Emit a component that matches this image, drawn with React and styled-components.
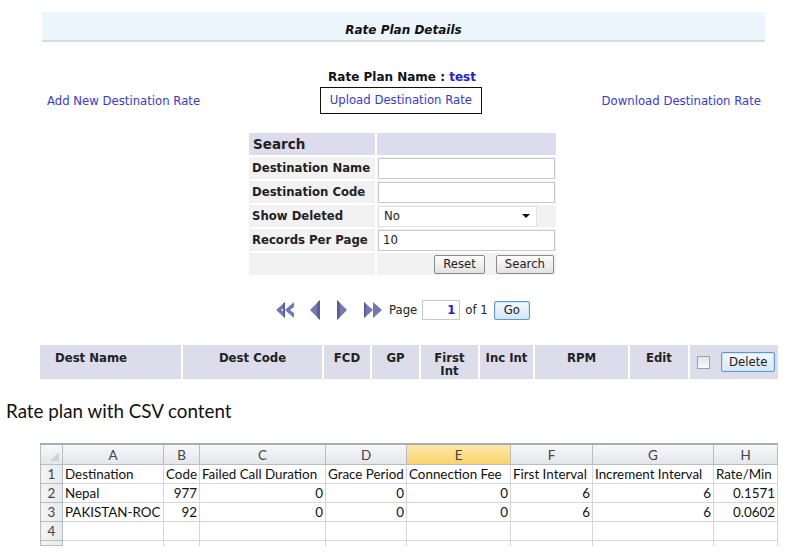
import React from "react";
import styled, { createGlobalStyle } from "styled-components";

const Global = createGlobalStyle`
  html, body { margin: 0; padding: 0; background: #fff; }
  body { font-family: "DejaVu Sans", Verdana, sans-serif; font-size: 11.7px; color: #222; }
`;

const Page = styled.div`
  width: 794px;
  height: 557px;
  overflow: hidden;
  padding-top: 12px;
  box-sizing: border-box;
`;

const TitleBar = styled.div`
  box-sizing: border-box;
  margin: 0 29px 0 42px;
  height: 30px;
  background: #edf5fd;
  border-bottom: 2px solid #d6dbe0;
  display: flex;
  align-items: center;
  justify-content: center;
  font-weight: bold;
  font-style: italic;
  font-size: 12px;
  color: #111;
  padding-top: 7px;
`;

const PlanName = styled.div`
  margin-top: 28px;
  text-align: center;
  font-weight: bold;
  font-size: 12px;
  color: #111;
  padding-left: 10px;
  span { color: #2222cc; }
`;

const LinkRow = styled.div`
  display: flex;
  justify-content: space-between;
  align-items: center;
  margin: 3px 33px 0 47px;
`;

const Link = styled.a`
  color: #3a3acc;
  font-size: 11.7px;
  text-decoration: none;
  cursor: pointer;
  border: ${(p) => (p.$boxed ? "1px solid #111" : "none")};
  padding: ${(p) => (p.$boxed ? "5px 9px 6px" : "0")};
`;

const SearchTable = styled.table`
  margin: 17px 0 0 247px;
  border-spacing: 2px;
  width: 311px;
`;

const HeadCell = styled.th`
  background: #dcdcee;
  height: 22px;
  padding: 0 4px;
  text-align: left;
  font-size: 13.5px;
  color: #222;
`;

const Label = styled.td`
  background: #f2f2f2;
  height: 22px;
  padding: 0 3px;
  font-weight: bold;
  font-size: 11.7px;
  color: #222;
  width: 120px;
  white-space: nowrap;
`;

const Field = styled.td`
  background: #f2f2f2;
  padding: 0;
  text-align: ${(p) => (p.$right ? "right" : "left")};
`;

const TextInput = styled.input`
  box-sizing: border-box;
  width: 177px;
  height: 21px;
  border: 1px solid #c8c8c8;
  font-family: "DejaVu Sans", Verdana, sans-serif;
  font-size: 11.7px;
  color: #222;
  padding: 0 4px;
  margin-left: 1px;
  background: #fff;
`;

const SelectBox = styled.div`
  box-sizing: border-box;
  width: 159px;
  height: 21px;
  margin-left: 1px;
  background: #fff;
  border: 1px solid #e2e2e2;
  display: flex;
  align-items: center;
  justify-content: space-between;
  padding: 0 6px 0 5px;
  font-size: 11.7px;
`;

const Caret = styled.span`
  width: 0;
  height: 0;
  border-left: 4px solid transparent;
  border-right: 4px solid transparent;
  border-top: 4px solid #111;
`;

const Btn = styled.button`
  font-family: "DejaVu Sans", Verdana, sans-serif;
  font-size: 11.7px;
  color: #222;
  height: 19px;
  padding: 0 8px;
  border: 1px solid #8a8a8a;
  border-radius: 2px;
  background: linear-gradient(#fdfdfd, #e2e2e2);
  margin-left: ${(p) => p.$ml || 0}px;
  margin-right: ${(p) => p.$mr || 0}px;
  vertical-align: middle;
`;

const BlueBtn = styled(Btn)`
  border: 1px solid #5d9ac8;
  background: linear-gradient(#f4f9fd, #d4e6f4);
  box-shadow: inset 0 0 0 1px #cfe4f5;
  padding: 0 ${(p) => p.$px || 7}px;
  height: ${(p) => p.$h || 19}px;
`;

const Pager = styled.div`
  display: flex;
  align-items: center;
  margin: 21px 0 0 275px;
  height: 24px;
  font-size: 11.7px;
  color: #222;
`;

const Arrow = styled.svg`
  display: block;
  margin-right: ${(p) => p.$mr}px;
`;

const PageInput = styled.div`
  box-sizing: border-box;
  width: 38px;
  height: 20px;
  border: 1px solid #c8c8c8;
  margin: 0 5px 0 5px;
  text-align: right;
  padding-right: 4px;
  line-height: 18px;
  color: #2222cc;
  font-weight: bold;
`;

const GridTable = styled.table`
  margin: 21px 0 0 38px;
  border-spacing: 2px;
  width: 742px;
  table-layout: fixed;
`;

const GridHead = styled.th`
  box-sizing: border-box;
  background: #dcdcea;
  height: 34px;
  vertical-align: top;
  padding: 7px 2px 0;
  font-size: 11.7px;
  text-align: center;
  line-height: 13px;
  color: #222;
  width: ${(p) => p.$w}px;
  ${(p) => (p.$left ? "text-align: left; padding-left: 15px;" : "")}
`;

const ActionHead = styled.th`
  box-sizing: border-box;
  background: #dcdcea;
  height: 34px;
  padding: 0 2px 0 7px;
  vertical-align: middle;
  width: ${(p) => p.$w}px;
`;

const ActionInner = styled.div`
  display: flex;
  align-items: center;
  gap: 11px;
  font-weight: normal;
`;

const Check = styled.span`
  display: inline-block;
  flex: none;
  width: 11px;
  height: 11px;
  border: 1px solid #a0a0a0;
  background: linear-gradient(#e4e4e4, #fafafa);
`;

const Caption = styled.div`
  margin: 18px 0 0 6px;
  font-family: Lato, "Open Sans", sans-serif;
  font-size: 18.8px;
  color: #111;
`;

const Sheet = styled.table`
  margin: 21px 0 0 40px;
  border-collapse: collapse;
  font-family: Lato, "Noto Sans", sans-serif;
  font-size: 13.4px;
  color: #111;
  table-layout: fixed;
  width: 737px;
`;

const Col = styled.col`
  width: ${(p) => p.$w}px;
`;

const ColHead = styled.th`
  height: 19px;
  font-weight: normal;
  color: #444;
  font-size: 13.4px;
  border: 1px solid #b8bcc4;
  border-top: 2px solid #a8acb4;
  background: ${(p) =>
    p.$active
      ? "linear-gradient(#fde9a8, #f9d26a)"
      : "linear-gradient(#f6f7f9, #e4e6ea)"};
  padding: 0;
`;

const RowHead = styled.td`
  background: linear-gradient(90deg, #f4f5f7, #e6e8eb);
  border: 1px solid #b8bcc4;
  text-align: center;
  color: #444;
  height: ${(p) => (p.$stub ? 4 : 18)}px;
  padding: 0;
`;

const Cell = styled.td`
  border: 1px solid #d6d6d6;
  border-bottom: ${(p) => (p.$stub ? "none" : "1px solid #d6d6d6")};
  padding: 0 2px;
  white-space: nowrap;
  overflow: hidden;
  text-align: ${(p) => (p.$num ? "right" : "left")};
`;

const Corner = styled.th`
  border: 1px solid #b8bcc4;
  border-top: 2px solid #a8acb4;
  background: linear-gradient(#f6f7f9, #e4e6ea);
  position: relative;
  padding: 0;
`;

const CornerTri = styled.span`
  position: absolute;
  right: 3px;
  bottom: 3px;
  width: 0;
  height: 0;
  border-left: 9px solid transparent;
  border-bottom: 9px solid #d0d2d6;
`;

const arrowColor = "#7377b4";

const DoubleLeft = () => (
  <Arrow $mr={13} width="21" height="20" viewBox="0 0 21 20">
    <polygon points="10,2 1,10 10,18 10,13 6,10 10,7" fill={arrowColor} />
    <polygon points="19,2 10,10 19,18 19,13 15,10 19,7" fill={arrowColor} />
    <polygon points="10,2 10,18 8,16 8,4" fill="#5b5f9e" />
  </Arrow>
);
const Left = () => (
  <Arrow $mr={15} width="12" height="22" viewBox="0 0 12 22">
    <polygon points="11,1 1,11 11,21" fill={arrowColor} />
    <polygon points="11,1 11,21 8,18 8,4" fill="#5b5f9e" />
  </Arrow>
);
const Right = () => (
  <Arrow $mr={14} width="12" height="22" viewBox="0 0 12 22">
    <polygon points="1,1 11,11 1,21" fill={arrowColor} />
    <polygon points="1,1 1,21 4,18 4,4" fill="#5b5f9e" />
  </Arrow>
);
const DoubleRight = () => (
  <Arrow $mr={6} width="21" height="20" viewBox="0 0 21 20">
    <polygon points="2,2 11,10 2,18" fill={arrowColor} />
    <polygon points="11,2 20,10 11,18" fill={arrowColor} />
    <polygon points="2,2 2,18 4,16 4,4" fill="#5b5f9e" />
  </Arrow>
);

const cols = [
  { k: "A", w: 101 },
  { k: "B", w: 36 },
  { k: "C", w: 126 },
  { k: "D", w: 81 },
  { k: "E", w: 104, active: true },
  { k: "F", w: 82 },
  { k: "G", w: 121 },
  { k: "H", w: 64 },
];

const rows = [
  [["Destination"], ["Code"], ["Failed Call Duration"], ["Grace Period"], ["Connection Fee"], ["First Interval"], ["Increment Interval"], ["Rate/Min"]],
  [["Nepal"], ["977", 1], ["0", 1], ["0", 1], ["0", 1], ["6", 1], ["6", 1], ["0.1571", 1]],
  [["PAKISTAN-ROC"], ["92", 1], ["0", 1], ["0", 1], ["0", 1], ["6", 1], ["6", 1], ["0.0602", 1]],
  [[""], [""], [""], [""], [""], [""], [""], [""]],
];

export default function App() {
  return (
    <Page>
      <Global />
      <TitleBar>Rate Plan Details</TitleBar>
      <PlanName>
        Rate Plan Name : <span>test</span>
      </PlanName>
      <LinkRow>
        <Link>Add New Destination Rate</Link>
        <Link $boxed>Upload Destination Rate</Link>
        <Link>Download Destination Rate</Link>
      </LinkRow>

      <SearchTable>
        <tbody>
          <tr>
            <HeadCell>Search</HeadCell>
            <HeadCell />
          </tr>
          <tr>
            <Label>Destination Name</Label>
            <Field><TextInput /></Field>
          </tr>
          <tr>
            <Label>Destination Code</Label>
            <Field><TextInput /></Field>
          </tr>
          <tr>
            <Label>Show Deleted</Label>
            <Field>
              <SelectBox>No<Caret /></SelectBox>
            </Field>
          </tr>
          <tr>
            <Label>Records Per Page</Label>
            <Field><TextInput defaultValue="10" /></Field>
          </tr>
          <tr>
            <Label />
            <Field $right>
              <Btn>Reset</Btn>
              <Btn $ml={11} $mr={2}>Search</Btn>
            </Field>
          </tr>
        </tbody>
      </SearchTable>

      <Pager>
        <DoubleLeft />
        <Left />
        <Right />
        <DoubleRight />
        Page
        <PageInput>1</PageInput>
        of 1
        <BlueBtn $ml={6} $px={9}>Go</BlueBtn>
      </Pager>

      <GridTable>
        <thead>
          <tr>
            <GridHead $w={141} $left>Dest Name</GridHead>
            <GridHead $w={139}>Dest Code</GridHead>
            <GridHead $w={46}>FCD</GridHead>
            <GridHead $w={47}>GP</GridHead>
            <GridHead $w={57}>First<br />Int</GridHead>
            <GridHead $w={53}>Inc Int</GridHead>
            <GridHead $w={93}>RPM</GridHead>
            <GridHead $w={58}>Edit</GridHead>
            <ActionHead $w={88}>
              <ActionInner>
                <Check />
                <BlueBtn $h={20}>Delete</BlueBtn>
              </ActionInner>
            </ActionHead>
          </tr>
        </thead>
      </GridTable>

      <Caption>Rate plan with CSV content</Caption>

      <Sheet>
        <colgroup>
          <Col $w={22} />
          {cols.map((c) => (
            <Col key={c.k} $w={c.w} />
          ))}
        </colgroup>
        <thead>
          <tr>
            <Corner><CornerTri /></Corner>
            {cols.map((c) => (
              <ColHead key={c.k} $active={c.active}>{c.k}</ColHead>
            ))}
          </tr>
        </thead>
        <tbody>
          {rows.map((r, i) => (
            <tr key={i}>
              <RowHead>{i + 1}</RowHead>
              {r.map(([t, n], j) => (
                <Cell key={j} $num={n}>{t}</Cell>
              ))}
            </tr>
          ))}
          <tr>
            <RowHead $stub />
            {cols.map((c) => (
              <Cell key={c.k} $stub />
            ))}
          </tr>
        </tbody>
      </Sheet>
    </Page>
  );
}
